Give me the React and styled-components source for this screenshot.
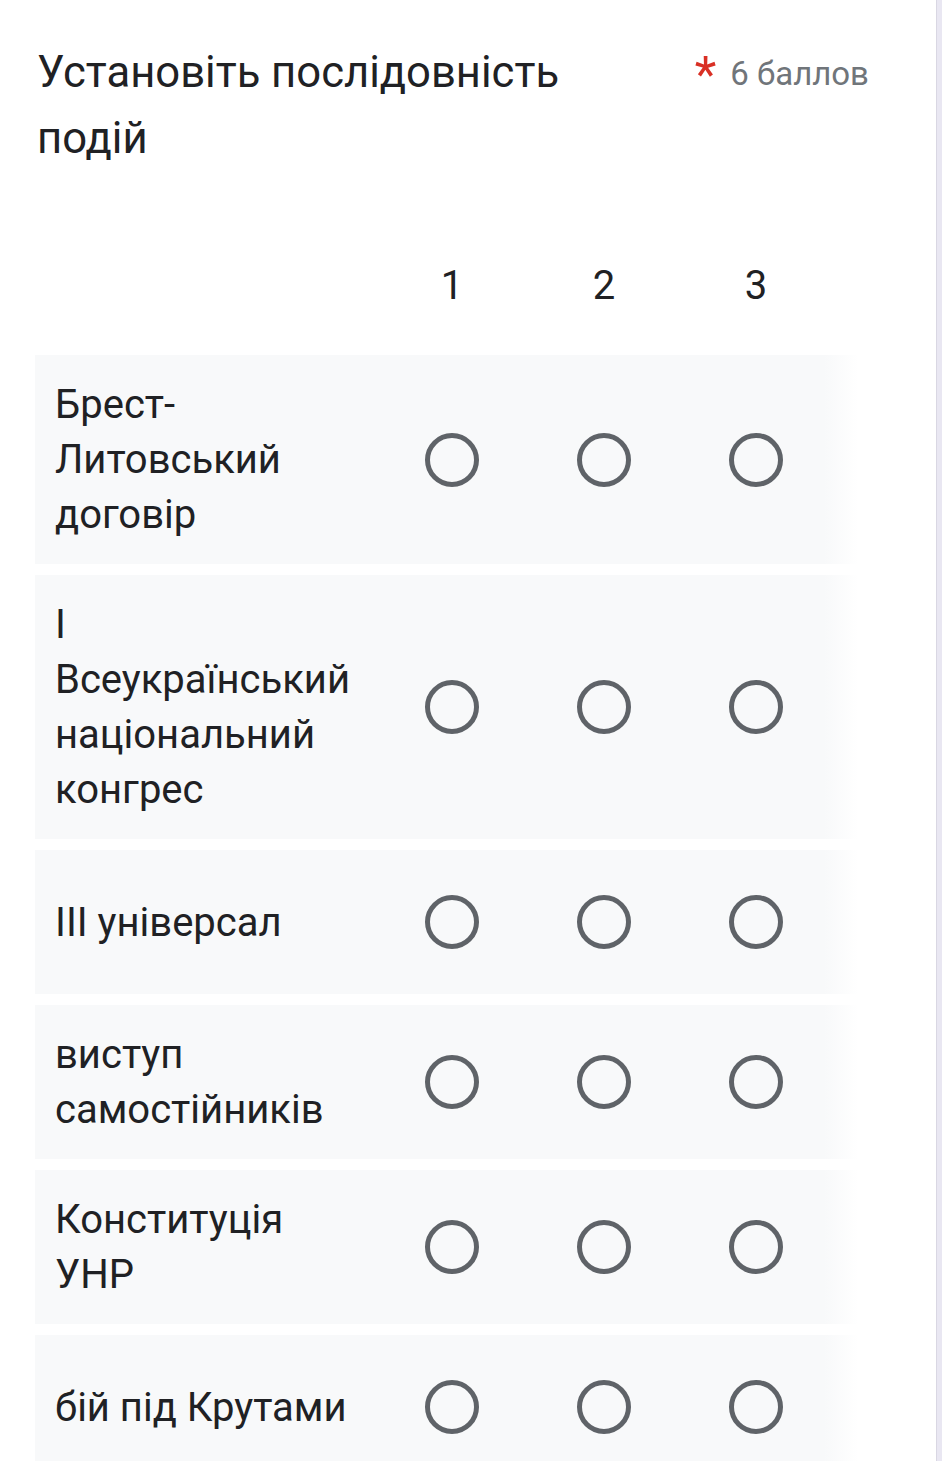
import React from 'react';
import styled, { createGlobalStyle } from 'styled-components';

const GlobalStyle = createGlobalStyle`
  html, body {
    margin: 0;
    padding: 0;
    background: #ffffff;
  }
  body {
    font-family: Roboto, "Noto Sans", Arial, sans-serif;
    color: #202124;
  }
`;

const rows = [
  'Брест-Литовський договір',
  'І Всеукраїнський національний конгрес',
  'ІІІ універсал',
  'виступ самостійників',
  'Конституція УНР',
  'бій під Крутами',
];

const columns = ['1', '2', '3'];

const Page = styled.div`
  width: 942px;
  min-height: 1461px;
  box-sizing: border-box;
  padding: 40px 0 0 35px;
  border-right: 5px solid #e9e7f2;
  box-shadow: inset -1px 0 0 #d9d7e3;
  overflow: hidden;
`;

const Header = styled.div`
  display: flex;
  align-items: flex-start;
  width: 834px;
`;

const Title = styled.div`
  width: 600px;
  padding-left: 2px;
  font-size: 43.6px;
  line-height: 66px;
  color: #202124;
`;

const Points = styled.div`
  margin-left: auto;
  display: flex;
  align-items: flex-start;
  gap: 14px;
  padding-top: 12px;
`;

const Asterisk = styled.span`
  color: #d93025;
  font-size: 50px;
  line-height: 50px;
  margin-top: -2px;
`;

const Score = styled.span`
  color: #70757a;
  font-size: 33px;
  line-height: 44px;
`;

const Grid = styled.div`
  margin-top: 58px;
  width: 823px;
  display: flex;
  flex-direction: column;
  gap: 11px;
`;

const Line = styled.div`
  display: grid;
  grid-template-columns: 321px repeat(3, 152px);
  align-items: center;
  box-sizing: border-box;
  padding: 0 26px 0 20px;
`;

const HeadLine = styled(Line)`
  height: 110px;
  margin-bottom: 4px;
`;

const ItemLine = styled(Line)`
  min-height: 144px;
  padding-top: 22px;
  padding-bottom: 22px;
  background: linear-gradient(to right, #f8f9fa calc(100% - 34px), #ffffff);
`;

const ColLabel = styled.div`
  text-align: center;
  font-size: 40px;
  line-height: 55px;
  color: #202124;
`;

const RowLabel = styled.div`
  padding-right: 14px;
  font-size: 40px;
  line-height: 55px;
  color: #202124;
`;

const Cell = styled.div`
  display: flex;
  justify-content: center;
  align-items: center;
`;

const Radio = styled.span`
  width: 54px;
  height: 54px;
  box-sizing: border-box;
  border-radius: 50%;
  border: 5px solid #5f6368;
`;

export default function App() {
  return (
    <Page>
      <GlobalStyle />
      <Header>
        <Title>Установіть послідовність подій</Title>
        <Points>
          <Asterisk>*</Asterisk>
          <Score>6 баллов</Score>
        </Points>
      </Header>
      <Grid>
        <HeadLine>
          <div />
          {columns.map((c) => (
            <ColLabel key={c}>{c}</ColLabel>
          ))}
        </HeadLine>
        {rows.map((r) => (
          <ItemLine key={r}>
            <RowLabel>{r}</RowLabel>
            {columns.map((c) => (
              <Cell key={c}>
                <Radio />
              </Cell>
            ))}
          </ItemLine>
        ))}
      </Grid>
    </Page>
  );
}
